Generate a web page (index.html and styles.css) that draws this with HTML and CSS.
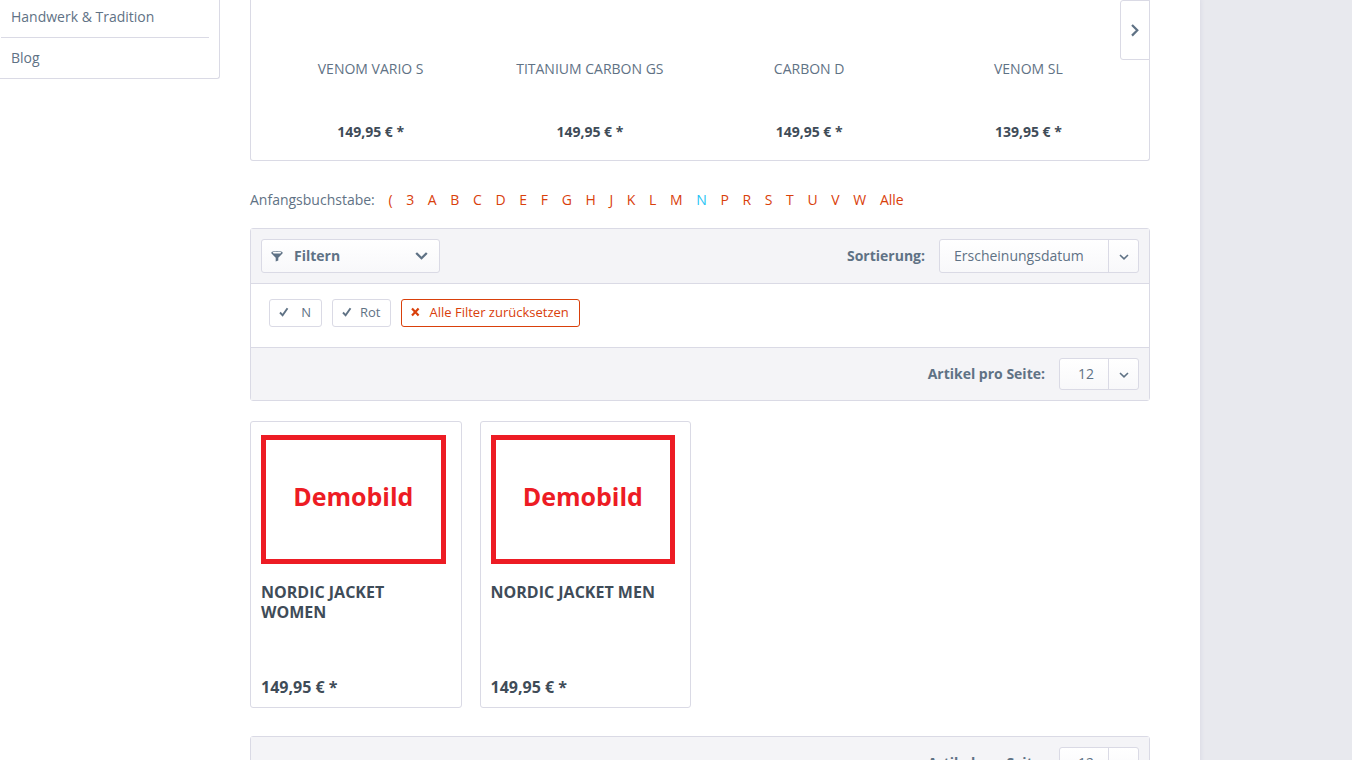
FILE: index.html
```html
<!DOCTYPE html>
<html lang="de">
<head>
<meta charset="utf-8">
<meta name="viewport" content="width=device-width, initial-scale=1">
<title>Produkte</title>
<link rel="stylesheet" href="styles.css">
</head>
<body>
<div class="page">
  <aside class="sidebar">
    <ul class="nav">
      <li class="nav-item"><a href="#">Handwerk &amp; Tradition</a></li>
      <li class="nav-item"><a href="#">Blog</a></li>
    </ul>
  </aside>
  <main class="content">
    <section class="slider">
      <div class="slide"><a class="slide-name" href="#">VENOM VARIO S</a><strong class="slide-price">149,95&nbsp;€ *</strong></div>
      <div class="slide"><a class="slide-name" href="#">TITANIUM CARBON GS</a><strong class="slide-price">149,95&nbsp;€ *</strong></div>
      <div class="slide"><a class="slide-name" href="#">CARBON D</a><strong class="slide-price">149,95&nbsp;€ *</strong></div>
      <div class="slide"><a class="slide-name" href="#">VENOM SL</a><strong class="slide-price">139,95&nbsp;€ *</strong></div>
      <button class="slider-next" type="button" aria-label="Weiter">
        <svg width="8" height="14" viewBox="0 0 8 14"><path d="M1 2l5.300 5.300L1 12.600" fill="none" stroke="currentColor" stroke-width="2.200"/></svg>
      </button>
    </section>

    <nav class="letters">
      <span class="letters-label">Anfangsbuchstabe:</span>
      <a href="#">(</a>
      <a href="#">3</a>
      <a href="#">A</a>
      <a href="#">B</a>
      <a href="#">C</a>
      <a href="#">D</a>
      <a href="#">E</a>
      <a href="#">F</a>
      <a href="#">G</a>
      <a href="#">H</a>
      <a href="#">J</a>
      <a href="#">K</a>
      <a href="#">L</a>
      <a href="#">M</a>
      <a class="current" href="#">N</a>
      <a href="#">P</a>
      <a href="#">R</a>
      <a href="#">S</a>
      <a href="#">T</a>
      <a href="#">U</a>
      <a href="#">V</a>
      <a href="#">W</a>
      <a href="#">Alle</a>
    </nav>

    <section class="panel">
      <div class="panel-bar">
        <button class="filter-button" type="button">
          <svg width="12" height="12" viewBox="0 0 12 12"><path fill="currentColor" fill-rule="evenodd" d="M6 1C2.500 1 .3 1.700.3 2.800c0 .5.3.8.700 1.200l3.700 3.700v3.800l2.600-1V7.700L11 4c.4-.4.7-.7.7-1.200C11.700 1.700 9.500 1 6 1zM6 1.800c2.700 0 4.300.4 4.300.9S8.700 3.600 6 3.600 1.700 3.200 1.700 2.700 3.300 1.800 6 1.800z"/></svg>
          <span class="filter-text">Filtern</span>
          <svg width="14" height="8" viewBox="0 0 14 8"><path d="M1.200 1l5.300 5.200L11.800 1" fill="none" stroke="currentColor" stroke-width="2.300"/></svg>
        </button>
        <div class="field">
          <label for="sort">Sortierung:</label>
          <span class="select select-sort">
            <select id="sort"><option>Erscheinungsdatum</option></select>
            <svg class="select-arrow" width="10" height="6" viewBox="0 0 10 6"><path d="M1 1l4 3.800L9 1" fill="none" stroke="currentColor" stroke-width="1.600"/></svg>
          </span>
        </div>
      </div>
      <div class="chips">
        <button class="chip" type="button"><svg width="10" height="10" viewBox="0 0 10 10"><path d="M1 5.500l2.600 2.800L8.500 1.200" fill="none" stroke="currentColor" stroke-width="1.900"/></svg>N</button>
        <button class="chip" type="button"><svg width="10" height="10" viewBox="0 0 10 10"><path d="M1 5.500l2.600 2.800L8.500 1.200" fill="none" stroke="currentColor" stroke-width="1.900"/></svg>Rot</button>
        <button class="chip chip-reset" type="button"><svg width="10" height="10" viewBox="0 0 10 10"><path d="M1 1.500l6.600 7M7.600 1.500L1 8.500" fill="none" stroke="currentColor" stroke-width="2.200"/></svg>Alle Filter zurücksetzen</button>
      </div>
      <div class="panel-bar panel-foot">
        <div class="field">
          <label for="count-top">Artikel pro Seite:</label>
          <span class="select select-count">
            <select id="count-top"><option>12</option></select>
            <svg class="select-arrow" width="10" height="6" viewBox="0 0 10 6"><path d="M1 1l4 3.800L9 1" fill="none" stroke="currentColor" stroke-width="1.600"/></svg>
          </span>
        </div>
      </div>
    </section>

    <section class="products">
      <article class="card">
        <div class="card-image">Demobild</div>
        <a class="card-title" href="#">NORDIC JACKET WOMEN</a>
        <strong class="card-price">149,95&nbsp;€ *</strong>
      </article>
      <article class="card">
        <div class="card-image">Demobild</div>
        <a class="card-title" href="#">NORDIC JACKET MEN</a>
        <strong class="card-price">149,95&nbsp;€ *</strong>
      </article>
    </section>

    <section class="panel">
      <div class="panel-bar panel-foot panel-only">
        <div class="field">
          <label for="count-bottom">Artikel pro Seite:</label>
          <span class="select select-count">
            <select id="count-bottom"><option>12</option></select>
            <svg class="select-arrow" width="10" height="6" viewBox="0 0 10 6"><path d="M1 1l4 3.800L9 1" fill="none" stroke="currentColor" stroke-width="1.600"/></svg>
          </span>
        </div>
      </div>
    </section>
  </main>
</div>
</body>
</html>
```

FILE: styles.css
```css
* {
  box-sizing: border-box;
}

body {
  height: 100vh;
  margin: 0;
  overflow: hidden;
  background: #e8e9ee;
  color: #5f7285;
  font: 14px/20px "Open Sans", "Noto Sans", sans-serif;
}

a {
  color: inherit;
  text-decoration: none;
}

button,
select {
  font: inherit;
  color: inherit;
}

svg {
  display: block;
  flex: none;
}

.page {
  display: flex;
  gap: 30px;
  max-width: 1200px;
  min-height: 100vh;
  padding-right: 50px;
  background: #fff;
  box-shadow: 0 0 4px 1px #dadae5;
}

.sidebar {
  flex: 0 0 220px;
}

.nav {
  margin: -4px 0 0;
  padding: 0 10px 0 1px;
  list-style: none;
  border: solid #dadae5;
  border-width: 0 1px 1px 0;
  border-radius: 0 0 3px 0;
}

.nav-item {
  padding: 11px 10px 10px;
}

.nav-item + .nav-item {
  padding: 10px;
  border-top: 1px solid #dadae5;
}

.content {
  flex: 1;
  min-width: 0;
}

.slider {
  position: relative;
  display: grid;
  grid-template-columns: repeat(4, 1fr);
  padding: 59px 11px 18px 10px;
  border: 1px solid #dadae5;
  border-top: 0;
  border-radius: 0 0 3px 3px;
  text-align: center;
}

.slide {
  display: flex;
  flex-direction: column;
  gap: 43px;
}

.slide-price,
.card-price,
.card-title {
  color: #3f4c58;
  font-weight: 700;
}

.slider-next {
  position: absolute;
  top: 0;
  right: -1px;
  display: flex;
  align-items: center;
  justify-content: center;
  width: 30px;
  height: 60px;
  padding: 0;
  border: 1px solid #dadae5;
  border-radius: 3px 0 0 3px;
  background: #fff;
}

.letters {
  margin: 29px 0 18px;
  color: #d9400b;
}

.letters a {
  padding: 0 5px;
}

.letters-label {
  padding-right: 5px;
  color: #5f7285;
}

.letters .current {
  color: #1fc4f4;
}

.panel {
  border: 1px solid #dadae5;
  border-radius: 3px;
}

.panel-bar {
  display: flex;
  align-items: center;
  justify-content: space-between;
  padding: 10px;
  background: #f4f4f7;
  border-bottom: 1px solid #dadae5;
}

.panel-foot {
  justify-content: flex-end;
  border-top: 1px solid #dadae5;
  border-bottom: 0;
}

.panel-only {
  border-top: 0;
}

.filter-button {
  display: flex;
  align-items: center;
  width: 179px;
  height: 34px;
  padding: 0 10px 0 9px;
  border: 1px solid #dadae5;
  border-radius: 3px;
  background: linear-gradient(#fff, #f8f8fa);
  font-weight: 700;
}

.filter-text {
  flex: 1;
  padding-left: 11px;
  text-align: left;
}

.field {
  display: flex;
  align-items: center;
  gap: 14px;
  font-weight: 700;
}

.select {
  position: relative;
  font-weight: 400;
}

.select select {
  display: block;
  width: 100%;
  height: 34px;
  padding: 0 44px 0 14px;
  appearance: none;
  border: 1px solid #dadae5;
  border-radius: 3px;
  background: linear-gradient(#fff, #f8f8fa);
}

.select::after {
  content: "";
  position: absolute;
  top: 0;
  right: 30px;
  height: 100%;
  border-left: 1px solid #dadae5;
}

.select-arrow {
  position: absolute;
  top: 50%;
  right: 10px;
  margin-top: -2px;
}

.select-sort {
  width: 200px;
}

.select-count {
  width: 80px;
}

.select-count select {
  height: 32px;
  padding: 0 30px 0 18px;
}

.chips {
  display: flex;
  flex-wrap: wrap;
  gap: 10px;
  padding: 15px 18px 20px;
}

.chip {
  display: flex;
  align-items: center;
  justify-content: space-between;
  gap: 8px;
  min-width: 53px;
  height: 28px;
  padding: 0 10px 2px 9px;
  border: 1px solid #dadae5;
  border-radius: 3px;
  background: #fff;
  font-size: 13px;
}

.chip-reset {
  border-color: #d9400b;
  color: #d9400b;
}

.products {
  display: grid;
  grid-template-columns: repeat(4, 1fr);
  gap: 18px;
  margin: 20px 0 28px;
}

.card {
  display: flex;
  flex-direction: column;
  min-height: 287px;
  padding: 13px 10px 10px;
  border: 1px solid #dadae5;
  border-radius: 3px;
  font-size: 16px;
}

.card-image {
  display: flex;
  align-items: center;
  justify-content: center;
  height: 129px;
  margin: 0 5px 18px 0;
  padding-bottom: 8px;
  border: 5px solid #ed1c24;
  color: #ed1c24;
  font-size: 25px;
  font-weight: 700;
}

.card-price {
  margin-top: auto;
}
```
